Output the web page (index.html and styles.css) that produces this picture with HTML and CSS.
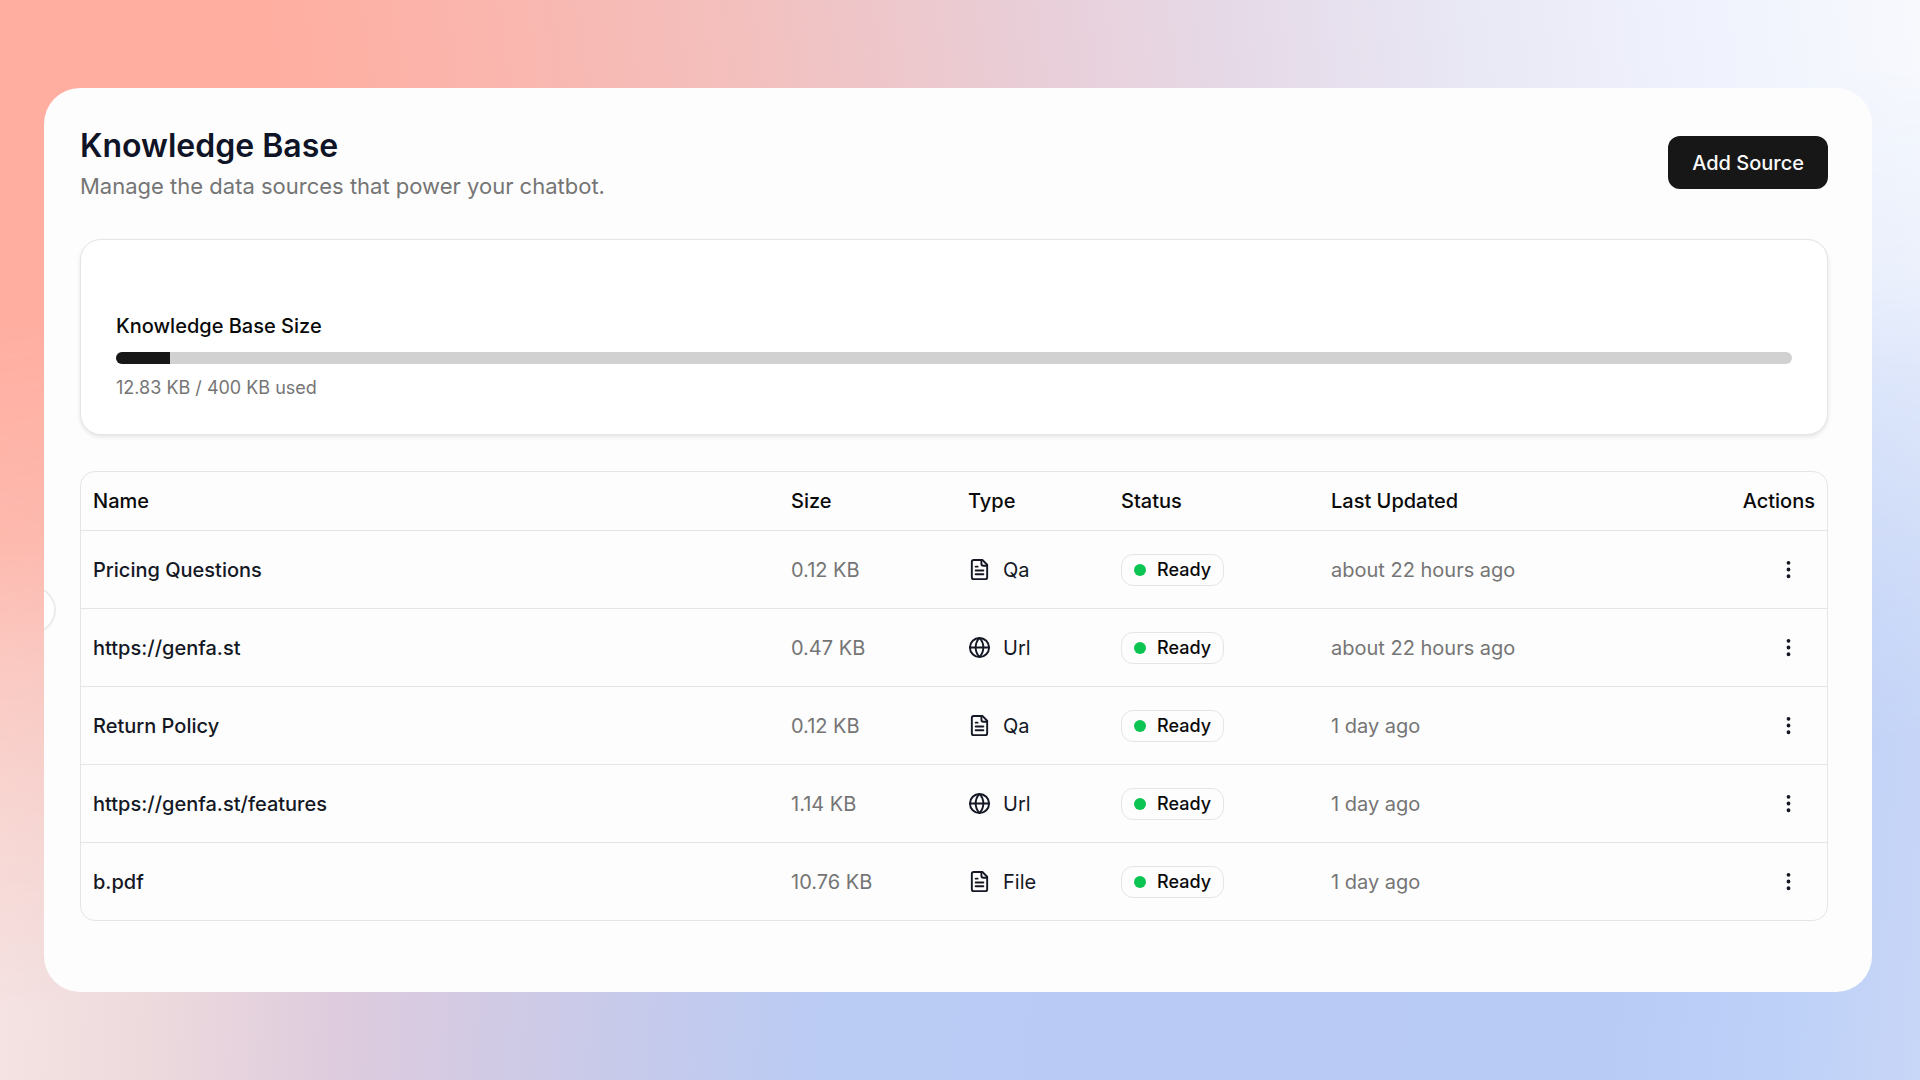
FILE: index.html
```html
<!DOCTYPE html>
<html lang="en">
<head>
<meta charset="utf-8">
<meta name="viewport" content="width=device-width, initial-scale=1">
<title>Knowledge Base</title>
<link rel="stylesheet" href="styles.css">
</head>
<body>
<svg class="sprite" aria-hidden="true">
  <symbol id="icon-file" viewBox="0 0 24 24"><path d="M15 2H6a2 2 0 0 0-2 2v16a2 2 0 0 0 2 2h12a2 2 0 0 0 2-2V7Z"/><path d="M14 2v4a2 2 0 0 0 2 2h4"/><path d="M10 9H8"/><path d="M16 13H8"/><path d="M16 17H8"/></symbol>
  <symbol id="icon-globe" viewBox="0 0 24 24"><circle cx="12" cy="12" r="10"/><path d="M12 2a14.5 14.5 0 0 0 0 20 14.5 14.5 0 0 0 0-20"/><path d="M2 12h20"/></symbol>
  <symbol id="icon-more" viewBox="0 0 24 24"><circle cx="12" cy="12" r="1"/><circle cx="12" cy="5" r="1"/><circle cx="12" cy="19" r="1"/></symbol>
</svg>
<main class="panel">
  <button class="sidebar-toggle" type="button" aria-label="Toggle sidebar"></button>
  <header class="page-header">
    <div>
      <h1 class="title">Knowledge Base</h1>
      <p class="subtitle">Manage the data sources that power your chatbot.</p>
    </div>
    <button class="add-button" type="button">Add Source</button>
  </header>
  <section class="usage">
    <label class="usage-label" for="usage-bar">Knowledge Base Size</label>
    <progress class="usage-bar" id="usage-bar" max="400" value="12.83"></progress>
    <p class="usage-note">12.83 KB / 400 KB used</p>
  </section>
  <div class="table-box">
    <table class="sources">
      <colgroup><col><col class="col-size"><col class="col-type"><col class="col-status"><col class="col-updated"><col class="col-actions"></colgroup>
      <thead>
        <tr><th scope="col">Name</th><th scope="col">Size</th><th scope="col">Type</th><th scope="col">Status</th><th scope="col">Last Updated</th><th scope="col" class="actions-head">Actions</th></tr>
      </thead>
      <tbody>
        <tr>
          <td class="name">Pricing Questions</td><td class="muted">0.12 KB</td>
          <td><span class="type"><svg class="icon"><use href="#icon-file"/></svg>Qa</span></td>
          <td><span class="badge"><span class="dot"></span>Ready</span></td>
          <td class="muted">about 22 hours ago</td>
          <td><button class="more" type="button" aria-label="Actions for Pricing Questions"><svg class="icon"><use href="#icon-more"/></svg></button></td>
        </tr>
        <tr>
          <td class="name">https://genfa.st</td><td class="muted">0.47 KB</td>
          <td><span class="type"><svg class="icon"><use href="#icon-globe"/></svg>Url</span></td>
          <td><span class="badge"><span class="dot"></span>Ready</span></td>
          <td class="muted">about 22 hours ago</td>
          <td><button class="more" type="button" aria-label="Actions for https://genfa.st"><svg class="icon"><use href="#icon-more"/></svg></button></td>
        </tr>
        <tr>
          <td class="name">Return Policy</td><td class="muted">0.12 KB</td>
          <td><span class="type"><svg class="icon"><use href="#icon-file"/></svg>Qa</span></td>
          <td><span class="badge"><span class="dot"></span>Ready</span></td>
          <td class="muted">1 day ago</td>
          <td><button class="more" type="button" aria-label="Actions for Return Policy"><svg class="icon"><use href="#icon-more"/></svg></button></td>
        </tr>
        <tr>
          <td class="name">https://genfa.st/features</td><td class="muted">1.14 KB</td>
          <td><span class="type"><svg class="icon"><use href="#icon-globe"/></svg>Url</span></td>
          <td><span class="badge"><span class="dot"></span>Ready</span></td>
          <td class="muted">1 day ago</td>
          <td><button class="more" type="button" aria-label="Actions for https://genfa.st/features"><svg class="icon"><use href="#icon-more"/></svg></button></td>
        </tr>
        <tr>
          <td class="name">b.pdf</td><td class="muted">10.76 KB</td>
          <td><span class="type"><svg class="icon"><use href="#icon-file"/></svg>File</span></td>
          <td><span class="badge"><span class="dot"></span>Ready</span></td>
          <td class="muted">1 day ago</td>
          <td><button class="more" type="button" aria-label="Actions for b.pdf"><svg class="icon"><use href="#icon-more"/></svg></button></td>
        </tr>
      </tbody>
    </table>
  </div>
</main>
</body>
</html>
```
FILE: styles.css
```css
* { box-sizing: border-box; }
body {
  position: relative;
  margin: 0;
  min-height: 100vh;
  padding: 88px 48px 88px 44px;
  font: 400 20px/28px Inter, sans-serif;
  color: #141824;
  background: linear-gradient(94deg, #f9e7e5 0%, #eddadd 11%, #ddcbde 21%, #cbcae8 32%, #bacbf4 45%, #b8cbf5 84%, #bcd0f8 92%, #c8d6f7 100%);
}
/* Warm upper gradient that fades diagonally into the blue one on the body */
body::before {
  content: "";
  position: absolute;
  inset: 0;
  background: linear-gradient(82deg, #ffaea0 0%, #ffaea0 20%, #fab6ae 31%, #f3c0be 43%, #e9cdd6 56%, #e6dae8 67%, #e9e8f5 78%, #f0f3fd 90%, #f7f9fd 100%);
  mask-image: linear-gradient(172deg, #000 24%, rgba(0, 0, 0, .8) 40%, rgba(0, 0, 0, .5) 49%, rgba(0, 0, 0, .2) 63%, transparent 75%);
}
h1, p { margin: 0; }
button { font: inherit; border: 0; padding: 0; cursor: pointer; }
.sprite { display: none; }
.panel {
  position: relative;
  overflow: hidden;
  min-height: calc(100vh - 176px);
  padding: 36px 44px 68px 36px;
  border-radius: 36px;
  background: #fdfdfd;
}
.sidebar-toggle {
  position: absolute;
  left: -36px;
  top: 498px;
  width: 48px;
  height: 48px;
  border: 2px solid #ebebeb;
  border-radius: 50%;
  background: #fff;
}
.page-header {
  display: flex;
  justify-content: space-between;
  align-items: flex-start;
  margin-bottom: 35px;
}
.title { font-size: 32px; line-height: 44px; font-weight: 600; color: #0f1426; }
.subtitle { font-size: 22px; line-height: 36px; color: #757575; }
.add-button {
  height: 53px;
  margin-top: 12px;
  padding: 0 24px;
  border-radius: 12px;
  background: #171717;
  color: #fafafa;
  font-weight: 500;
}
.usage {
  display: flex;
  flex-direction: column;
  gap: 12px;
  padding: 72px 35px 34px;
  margin-bottom: 36px;
  border: 1px solid #e5e5e5;
  border-radius: 21px;
  background: #fff;
  box-shadow: 0 2px 4px rgba(0, 0, 0, .1);
}
.usage-label { font-weight: 500; color: #0a0a0a; }
.usage-bar {
  appearance: none;
  display: block;
  width: 100%;
  height: 12px;
  border: 0;
  border-radius: 6px;
  overflow: hidden;
  background: #d1d1d1;
}
.usage-bar::-webkit-progress-bar { background: #d1d1d1; }
.usage-bar::-webkit-progress-value { background: #171717; }
.usage-note { font-size: 18px; line-height: 24px; color: #757575; }
.table-box { border: 1px solid #e5e5e5; border-radius: 15px; overflow: hidden; }
.sources { width: 100%; table-layout: fixed; border-collapse: separate; border-spacing: 0; }
.col-size { width: 177px; }
.col-type { width: 153px; }
.col-status { width: 210px; }
.col-updated { width: 400px; }
.col-actions { width: 108px; }
th, td { padding: 0 12px; text-align: left; vertical-align: middle; border-bottom: 1px solid #e5e5e5; }
th { height: 59px; font-weight: 500; color: #0a0a0a; }
td { height: 78px; }
tbody tr:last-child td { height: 77px; border-bottom: 0; }
.actions-head { text-align: right; }
.name { font-weight: 500; }
.muted { color: #757575; }
.type { display: flex; align-items: center; gap: 12px; }
.icon { width: 23px; height: 23px; fill: none; stroke: currentColor; stroke-width: 2; stroke-linecap: round; stroke-linejoin: round; }
.badge {
  display: inline-flex;
  align-items: center;
  gap: 11px;
  height: 32px;
  padding: 0 12px;
  border: 1px solid #e5e5e5;
  border-radius: 12px;
  font-size: 18px;
  font-weight: 500;
  color: #0a0a0a;
  vertical-align: middle;
}
.dot { width: 12px; height: 12px; border-radius: 50%; background: #0bc452; }
.more { display: flex; align-items: center; justify-content: center; width: 53px; height: 53px; margin-left: auto; background: none; color: inherit; }
```
